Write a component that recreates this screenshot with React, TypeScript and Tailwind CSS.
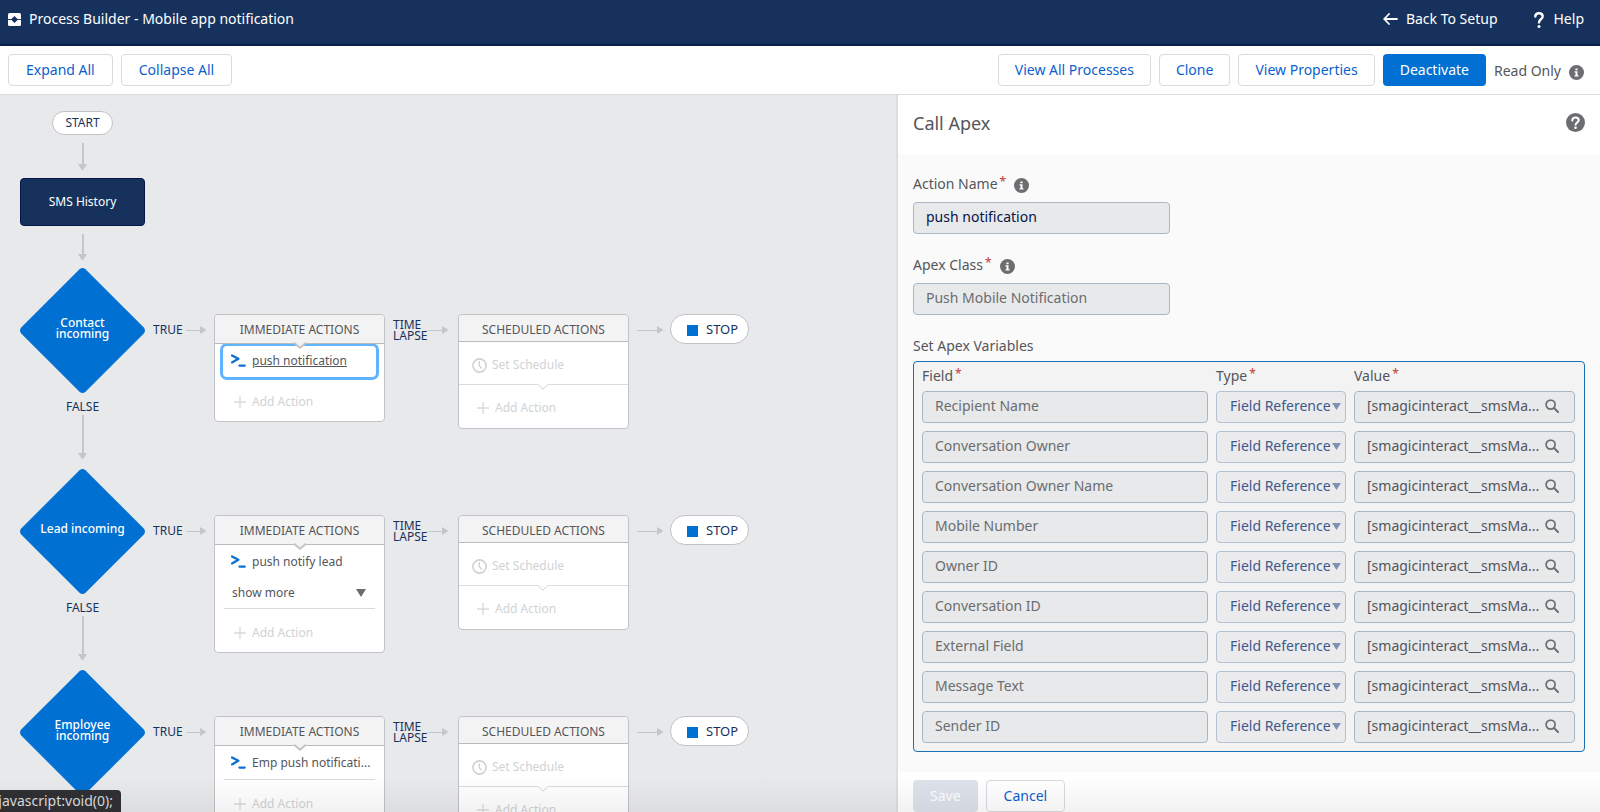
import React from "react";

type Action = { name: string; active?: boolean };
type Branch = { label: string; action: Action; more?: boolean };

const branches: Branch[] = [
  { label: "Contact incoming", action: { name: "push notification", active: true } },
  { label: "Lead incoming", action: { name: "push notify lead" }, more: true },
  { label: "Employee incoming", action: { name: "Emp push notificati..." } },
];

const variables = [
  "Recipient Name",
  "Conversation Owner",
  "Conversation Owner Name",
  "Mobile Number",
  "Owner ID",
  "Conversation ID",
  "External Field",
  "Message Text",
  "Sender ID",
];

function InfoIcon() {
  return (
    <svg viewBox="0 0 15 15" className="mt-0.5 size-[15px] shrink-0" aria-hidden="true">
      <circle cx="7.5" cy="7.5" r="7.5" fill="#6b6d70" />
      <path d="M6.4 3.4h2.2v1.8H6.4zM5.5 6.2h3v4h1v1.3h-4v-1.3h1V7.5h-1z" fill="#fff" />
    </svg>
  );
}

function DownArrow({ className }: { className: string }) {
  return (
    <div className={"flex flex-col items-center " + className} aria-hidden="true">
      <div className="w-0.5 flex-1 bg-[#c4c6ca]" />
      <svg viewBox="0 0 9 6" className="h-1.5 w-[9px]">
        <path d="M0 0h9L5.5 5.5q-1 1-2 0z" fill="#c4c6ca" />
      </svg>
    </div>
  );
}

function RightArrow({ className }: { className: string }) {
  return (
    <div className={"flex shrink-0 items-center " + className} aria-hidden="true">
      <div className="h-px flex-1 bg-[#c4c6ca]" />
      <svg viewBox="0 0 6 8" className="h-2 w-1.5">
        <path d="M0 0v8l5.5-3.3q.8-.7 0-1.4z" fill="#c4c6ca" />
      </svg>
    </div>
  );
}

function PlusIcon() {
  return (
    <svg viewBox="0 0 12 12" className="size-3" aria-hidden="true">
      <path d="M6 0v12M0 6h12" stroke="#d8dade" strokeWidth="1.4" />
    </svg>
  );
}

function ApexIcon() {
  return (
    <svg viewBox="0 0 15 13" className="h-[13px] w-[15px] shrink-0" fill="none" stroke="#0b6fd8" aria-hidden="true">
      <path d="M1 1.4 7.4 4.7 1 8.4" strokeWidth="2.3" strokeLinecap="round" strokeLinejoin="round" />
      <path d="M8.4 11.6h5.4" strokeWidth="2.2" strokeLinecap="round" />
    </svg>
  );
}

function ImmediateCard({ branch }: { branch: Branch }) {
  const active = branch.action.active;
  return (
    <section className="w-[171px] shrink-0 rounded border border-[#c0c2c7] bg-white">
      <h3 className="relative flex h-[29px] items-center justify-center rounded-t border-b border-[#b9bbc0] bg-[#f3f3f3] pt-0.5 text-xs text-[#54565b]">
        IMMEDIATE ACTIONS
        <svg viewBox="0 0 14 7" className="absolute top-[27px] left-[78px] z-10 h-[7px] w-3.5" aria-hidden="true">
          <path d="M0 0h14L7 6z" fill="#f3f3f3" />
          <path d="M1 .8 7 5.8 13 .8" fill="none" stroke="#c0c2c7" strokeWidth="1.8" />
        </svg>
      </h3>
      <div className="px-2 pt-0.5">
        <button
          type="button"
          className={
            active
              ? "flex h-[31px] w-full items-center gap-1.5 rounded-sm pb-0.5 pl-2 text-left text-xs text-[#54565b] underline ring-3 ring-[#5eb4ff]"
              : "flex h-[31px] w-full items-center gap-1.5 pb-0.5 pl-2 text-left text-xs text-[#54565b]"
          }
        >
          <ApexIcon />
          <span className="whitespace-nowrap">{branch.action.name}</span>
        </button>
        {branch.more && (
          <button type="button" className="flex h-[30px] w-full items-center justify-between pr-2.5 pl-[9px] text-xs text-[#54565b]">
            show more
            <svg viewBox="0 0 10 8" className="h-2 w-2.5" aria-hidden="true">
              <path d="M0 0h10L5 8z" fill="#6b6d70" />
            </svg>
          </button>
        )}
        <div className={active ? "mx-px h-px" : "mx-px h-px bg-[#d8dade]"} />
        <button type="button" disabled className="flex h-[43px] w-full items-center gap-1.5 pt-1 pl-[11px] text-xs text-[#d0d2d6]">
          <PlusIcon />
          Add Action
        </button>
      </div>
    </section>
  );
}

function ScheduledCard() {
  return (
    <section className="w-[171px] shrink-0 rounded border border-[#c0c2c7] bg-white">
      <h3 className="flex h-[27px] items-center justify-center rounded-t border-b border-[#b9bbc0] bg-[#f3f3f3] pt-1 text-xs text-[#54565b]">
        SCHEDULED ACTIONS
      </h3>
      <div className="relative border-b border-[#d8dade]">
        <button type="button" disabled className="flex h-[42px] w-full items-center gap-[5px] pt-1 pl-[13px] text-xs text-[#d0d2d6]">
          <svg viewBox="0 0 15 15" className="size-[15px]" fill="none" stroke="#d0d2d6" aria-hidden="true">
            <circle cx="7.5" cy="7.5" r="6.6" strokeWidth="1.6" />
            <path d="M7.3 3.6v4.1l2.2 2.2" strokeWidth="1.4" strokeLinecap="round" />
          </svg>
          Set Schedule
        </button>
        <svg viewBox="0 0 12 6" className="absolute top-[42px] left-[78px] h-1.5 w-3" aria-hidden="true">
          <path d="M0 0h12L6 6z" fill="#fff" />
          <path d="M.5 0 6 5.2 11.5 0" fill="none" stroke="#d0d2d6" />
        </svg>
      </div>
      <button type="button" disabled className="flex h-[43px] w-full items-center gap-1.5 pt-0.5 pl-[18px] text-xs text-[#d0d2d6]">
        <PlusIcon />
        Add Action
      </button>
    </section>
  );
}

function BranchRow({ branch }: { branch: Branch }) {
  return (
    <div className="flex items-start pl-5">
      <div className="flex w-[125px] shrink-0 flex-col items-center">
        <button type="button" className="relative flex size-[125px] items-center justify-center pb-1.5 text-white">
          <svg viewBox="0 0 125 125" className="absolute inset-0 size-full" aria-hidden="true">
            <path d="M59.5 1.2q3-2.4 6 0L123.8 59.5q2.4 3 0 6L65.5 123.8q-3 2.4-6 0L1.2 65.5q-2.4-3 0-6z" fill="#0070d2" />
          </svg>
          <span className="relative w-[90px] px-0.5 text-center text-xs leading-[11px] font-medium">{branch.label}</span>
        </button>
        <div className="mt-1.5 text-xs leading-4 text-[#16325c]">FALSE</div>
        <DownArrow className="mb-2.5 h-11" />
      </div>
      <div className="flex items-start pt-[46px] text-xs text-[#16325c]">
        <div className="flex h-8 w-[69px] items-center justify-between pr-2 pl-2">
          TRUE
          <RightArrow className="w-5" />
        </div>
        <ImmediateCard branch={branch} />
        <div className="flex h-8 w-[73px] items-center justify-between pr-2.5 pl-2">
          <span className="w-9 leading-[11px]">TIME LAPSE</span>
          <RightArrow className="w-5" />
        </div>
        <ScheduledCard />
        <div className="flex h-8 w-[41px] items-center pl-2">
          <RightArrow className="w-[26px]" />
        </div>
        <div className="flex h-[30px] w-[79px] shrink-0 items-center gap-2 rounded-full border border-[#c0c2c7] bg-white pt-0.5 pl-4 text-[13px]">
          <span className="size-[11px] bg-[#0070d2]" />
          STOP
        </div>
      </div>
    </div>
  );
}

const outlineButtonBase = "h-8 rounded border border-[#d8dade] bg-white text-sm text-[#0b5fce]";
const outlineButton = outlineButtonBase + " px-4";
const wideOutlineButton = outlineButtonBase + " px-[17px]";
const disabledField = "h-8 w-full rounded border border-[#a8b7c7] bg-[#e8e9eb] px-3 pb-1 text-sm";

function Required() {
  return <span className="ml-0.5 align-top text-xs leading-4 text-[#c23934]">*</span>;
}

export default function App() {
  return (
    <div className="relative flex h-screen flex-col overflow-hidden bg-white font-['Noto_Sans',sans-serif] text-sm text-[#54565b]">
      <header className="flex h-[46px] shrink-0 items-center justify-between border-b-2 border-[#0b1f4a] bg-[#16325c] px-4 pb-1.5 text-white">
        <h1 className="-ml-2 flex items-center gap-2">
          <svg viewBox="0 0 13 13" className="size-[13px]" aria-hidden="true">
            <rect width="13" height="13" rx="1.5" fill="#fff" />
            <path d="M6.5 3 10 6.5 6.5 10 3 6.5z" fill="#16325c" />
            <path d="M0 6.5h13" stroke="#16325c" strokeWidth="0.9" />
          </svg>
          Process Builder - Mobile app notification
        </h1>
        <nav className="flex items-center gap-9">
          <a href="#setup" className="flex items-center gap-2">
            <svg viewBox="0 0 15 12" className="h-3 w-[15px]" fill="none" stroke="#fff" strokeWidth="1.8" strokeLinecap="round" strokeLinejoin="round" aria-hidden="true">
              <path d="M14 6H1.2M6 1 1.2 6 6 11" />
            </svg>
            Back To Setup
          </a>
          <a href="#help" className="flex items-center gap-2.5">
            <svg viewBox="0 0 10 16" className="mt-0.5 h-4 w-2.5" fill="none" stroke="#fff" aria-hidden="true">
              <path d="M1.3 4.6C1.3 2.4 2.9 1.3 5 1.3s3.7 1.3 3.7 3.3C8.700 7.300 5 7.300 5 10.400" strokeWidth="2.4" strokeLinecap="round" />
              <circle cx="5" cy="14.400" r="1.500" fill="#fff" stroke="none" />
            </svg>
            Help
          </a>
        </nav>
      </header>

      <div className="flex h-[49px] shrink-0 items-center justify-between border-b border-[#d8dade] px-2">
        <div className="flex gap-2">
          <button type="button" className={wideOutlineButton}>Expand All</button>
          <button type="button" className={wideOutlineButton}>Collapse All</button>
        </div>
        <div className="flex items-center gap-2 pr-2">
          <button type="button" className={outlineButton}>View All Processes</button>
          <button type="button" className={outlineButton}>Clone</button>
          <button type="button" className={outlineButton}>View Properties</button>
          <button type="button" className="h-8 rounded bg-[#0070d2] px-[17px] text-sm text-white">Deactivate</button>
          <span className="flex items-center gap-2 pt-0.5">
            Read Only
            <InfoIcon />
          </span>
        </div>
      </div>

      <div className="flex min-h-0 flex-1">
        <main className="min-w-0 flex-1 overflow-hidden bg-[#e8e9eb] pt-4">
          <div className="flex w-[165px] flex-col items-center">
            <div className="flex h-6 items-center rounded-full border border-[#c0c2c7] bg-white px-3 text-xs text-[#16325c]">START</div>
            <DownArrow className="mt-2 h-[27px]" />
            <button type="button" className="mt-2 h-[48px] w-[125px] rounded border border-[#04154a] bg-[#16325c] text-xs text-white">
              SMS History
            </button>
            <DownArrow className="my-2 h-[26px]" />
          </div>
          {branches.map((branch) => (
            <BranchRow key={branch.label} branch={branch} />
          ))}
        </main>

        <aside className="flex w-[44%] shrink-0 flex-col border-l-2 border-[#dddee1] bg-[#fafafa]">
          <div className="flex h-[59px] shrink-0 items-center justify-between bg-white px-[15px] pb-1">
            <h2 className="text-lg">Call Apex</h2>
            <svg viewBox="0 0 19 19" className="size-[19px]" aria-hidden="true">
              <circle cx="9.5" cy="9.5" r="9.5" fill="#6b6d70" />
              <path d="M6.3 7.6c0-2 1.4-3.1 3.2-3.1s3.2 1.1 3.2 2.8c0 2.2-3.1 2.2-3.1 4.5" fill="none" stroke="#fff" strokeWidth="2.1" strokeLinecap="round" />
              <circle cx="9.5" cy="14.8" r="1.3" fill="#fff" />
            </svg>
          </div>

          <form className="min-h-0 flex-1 px-[15px] pt-5">
            <div className="flex h-5 items-center gap-2">
              <label htmlFor="action-name">Action Name<Required /></label>
              <InfoIcon />
            </div>
            <input id="action-name" readOnly value="push notification" className={disabledField + " mt-2 max-w-[257px] text-[#04154a]"} />
            <div className="mt-[21px] flex h-5 items-center gap-2">
              <label htmlFor="apex-class">Apex Class<Required /></label>
              <InfoIcon />
            </div>
            <input id="apex-class" readOnly value="Push Mobile Notification" className={disabledField + " mt-2 max-w-[257px] text-[#6b6d70]"} />
            <h3 className="mt-[21px] leading-5">Set Apex Variables</h3>
            <div className="mt-[5px] rounded border border-[#1b6fb5] bg-[#f3f3f3] pt-1 pr-px pl-2">
              <table className="w-full table-fixed border-collapse">
                <thead>
                  <tr className="h-[25px] text-left align-top">
                    <th className="w-[294px] font-normal">Field<Required /></th>
                    <th className="w-[138px] font-normal">Type<Required /></th>
                    <th className="font-normal">Value<Required /></th>
                  </tr>
                </thead>
                <tbody>
                  {variables.map((name) => (
                    <tr key={name}>
                      <td className="pr-2 pb-2">
                        <input aria-label="Field" readOnly value={name} className={disabledField + " block text-[#6b6d70]"} />
                      </td>
                      <td className="pr-2 pb-2">
                        <div className="relative">
                          <select aria-label={name + " type"} disabled className="block h-8 w-full appearance-none rounded border border-[#b4c1d0] bg-[#ebebed] pb-0.5 pl-[13px] text-sm text-[#41588a] opacity-100">
                            <option>Field Reference</option>
                          </select>
                          <svg viewBox="0 0 9 7" className="absolute top-3 right-[5px] h-[7px] w-[9px]" aria-hidden="true">
                            <path d="M0 0h9L4.5 7z" fill="#7f92b4" />
                          </svg>
                        </div>
                      </td>
                      <td className="pr-2 pb-2">
                        <div className="relative">
                          <input aria-label={name + " value"} readOnly value="[smagicinteract__smsMa..." className={disabledField + " block text-[#54565b]"} />
                          <svg viewBox="0 0 14 14" className="absolute top-2 right-4 size-3.5" fill="none" stroke="#6b6d70" aria-hidden="true">
                            <circle cx="5.6" cy="5.6" r="4.5" strokeWidth="1.7" />
                            <path d="m9 9 4 4" strokeWidth="2" strokeLinecap="round" />
                          </svg>
                        </div>
                      </td>
                    </tr>
                  ))}
                </tbody>
              </table>
            </div>
          </form>

          <footer className="flex h-10 shrink-0 items-start gap-2 bg-white px-[15px] pt-2">
            <button type="button" disabled className="h-8 shrink-0 rounded bg-[#dde2ea] px-[17px] text-sm text-white">Save</button>
            <button type="button" className={wideOutlineButton}>Cancel</button>
          </footer>
        </aside>
      </div>

      <div className="pointer-events-none absolute inset-x-0 bottom-0 h-9 bg-linear-to-b from-transparent to-black/5" />
      <div className="absolute bottom-0 left-0 flex h-[22px] w-[121px] items-center justify-end overflow-hidden rounded-tr bg-[#2f2f33] pr-2 text-sm whitespace-nowrap text-[#d6d6d8]">
        javascript:void(0);
      </div>
    </div>
  );
}
